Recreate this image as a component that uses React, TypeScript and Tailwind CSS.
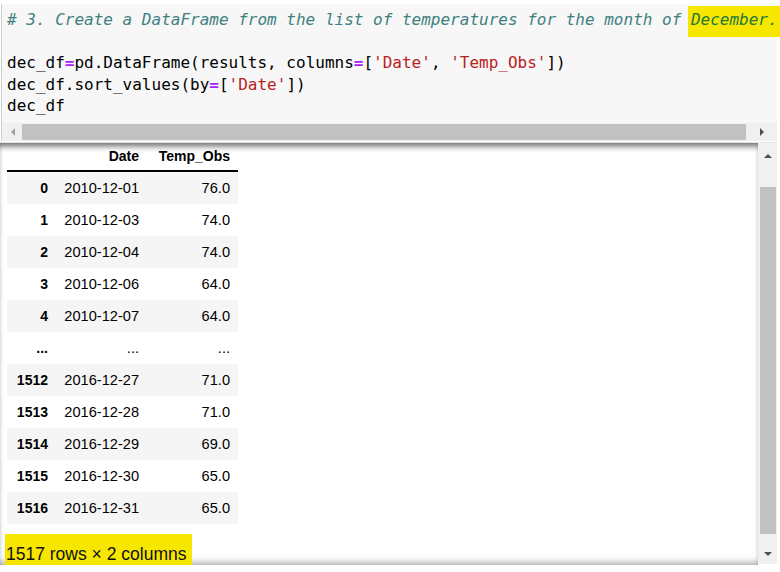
import {ReactElement} from 'react';

type Row = {
    index: string,
    date: string,
    temp: string,
    shaded: boolean,
};

const rows: Row[] = [
    {index: '0', date: '2010-12-01', temp: '76.0', shaded: true},
    {index: '1', date: '2010-12-03', temp: '74.0', shaded: false},
    {index: '2', date: '2010-12-04', temp: '74.0', shaded: true},
    {index: '3', date: '2010-12-06', temp: '64.0', shaded: false},
    {index: '4', date: '2010-12-07', temp: '64.0', shaded: true},
    {index: '...', date: '...', temp: '...', shaded: false},
    {index: '1512', date: '2016-12-27', temp: '71.0', shaded: true},
    {index: '1513', date: '2016-12-28', temp: '71.0', shaded: false},
    {index: '1514', date: '2016-12-29', temp: '69.0', shaded: true},
    {index: '1515', date: '2016-12-30', temp: '65.0', shaded: false},
    {index: '1516', date: '2016-12-31', temp: '65.0', shaded: true},
];

function Op(): ReactElement {
    return <span className="font-bold text-[#aa22ff]">=</span>;
}

function Str({children}: {children: string}): ReactElement {
    return <span className="text-[#ba2121]">{children}</span>;
}

function Arrow({dir, color}: {dir: 'up' | 'down' | 'left' | 'right', color: string}): ReactElement {
    const points = {
        up: '0,4 4,0 8,4',
        down: '0,0 8,0 4,4',
        left: '4,0 4,8 0,4',
        right: '0,0 0,8 4,4',
    }[dir];
    const vertical = dir === 'up' || dir === 'down';

    return (
        <svg width={vertical ? 8 : 4} height={vertical ? 4 : 8} viewBox={vertical ? '0 0 8 4' : '0 0 4 8'} aria-hidden="true">
            <polygon points={points} fill={color} />
        </svg>
    );
}

export default function App(): ReactElement {
    return (
        <div className="w-[780px] h-[572px] overflow-hidden bg-white pt-[4px]">
            <div className="w-[777px]">
                <div className="ml-px border-l border-[#cfcfcf] bg-[#f7f7f7]">
                    <pre className="pl-[5px] pt-[5px] pb-[6px] font-['DejaVu_Sans_Mono',monospace] text-[16px] leading-[21.6px] text-black whitespace-pre">
                        <div className="italic text-[#408080]">
                            # 3. Create a DataFrame from the list of temperatures for the month of{' '}
                            <span className="-ml-[3px] bg-[#f7e600] pl-[3px] pr-[2px] pt-[4px] pb-[8px] text-[#1f7a3c]">December.</span>
                        </div>
                        <div>&nbsp;</div>
                        <div>
                            dec_df<Op />pd.DataFrame(results, columns<Op />[<Str>'Date'</Str>, <Str>'Temp_Obs'</Str>])
                        </div>
                        <div>
                            dec_df.sort_values(by<Op />[<Str>'Date'</Str>])
                        </div>
                        <div>dec_df</div>
                    </pre>
                    <div className="flex h-[18px] items-center bg-[#f0f0f0]">
                        <div className="flex w-[20px] justify-center pl-[2px]">
                            <Arrow dir="left" color="#a3a3a3" />
                        </div>
                        <div className="h-[16px] w-[724px] bg-[#c1c1c1]" />
                        <div className="flex flex-1 justify-center pl-[1px]">
                            <Arrow dir="right" color="#505050" />
                        </div>
                    </div>
                </div>

                <div className="mt-px flex h-[423px] border-t border-[#e3e3e3]">
                    <div className="relative flex-1 overflow-hidden bg-white shadow-[inset_0_6px_6px_-3px_rgba(0,0,0,0.6),inset_0_-7px_6px_-4px_rgba(0,0,0,0.3)] font-['Liberation_Sans',Arial,sans-serif] text-black">
                        <div className="ml-[7px] w-[231px]">
                            <div className="flex h-[27px] items-center text-[14px] font-bold">
                                <div className="w-[48px]" />
                                <div className="w-[92px] pr-[8px] text-right">Date</div>
                                <div className="w-[91px] pr-[8px] text-right">Temp_Obs</div>
                            </div>
                            <div className="h-[2px] bg-black" />
                            {rows.map(
                                row => (
                                    <div
                                        key={row.index + row.date}
                                        className={`flex h-[32px] items-center pt-px ${row.shaded ? 'bg-[#f5f5f5]' : 'bg-white'}`}
                                    >
                                        <div className="w-[48px] pr-[7px] text-right text-[14px] font-bold">{row.index}</div>
                                        <div className="w-[92px] pr-[8px] text-right text-[14.6px]">{row.date}</div>
                                        <div className="w-[91px] pr-[8px] text-right text-[14.6px]">{row.temp}</div>
                                    </div>
                                ),
                            )}
                        </div>
                        <p className="ml-[5px] mt-[10px] inline-block h-[32px] bg-[#f7e600] pl-px pr-[6px] pt-[10px] text-[17.5px] leading-[20px] text-[#111]">
                            1517 rows × 2 columns
                        </p>
                    </div>
                    <div className="flex h-[421px] w-[19px] flex-col bg-[#f0f0f0]">
                        <div className="flex h-[26px] items-center justify-center pl-px">
                            <Arrow dir="up" color="#505050" />
                        </div>
                        <div className="h-[18px]" />
                        <div className="ml-[2px] mr-px h-[347px] bg-[#c1c1c1]" />
                        <div className="flex-1" />
                        <div className="flex h-[20px] items-center justify-center pl-px">
                            <Arrow dir="down" color="#505050" />
                        </div>
                    </div>
                </div>
            </div>
        </div>
    );
}
